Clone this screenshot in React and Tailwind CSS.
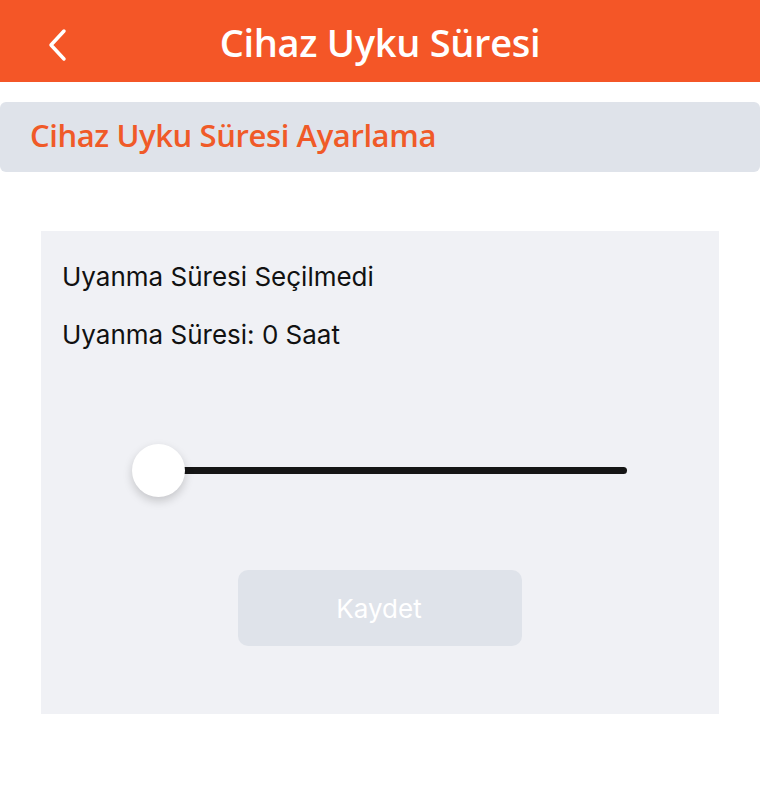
export default function App() {
  return (
    <div className="w-[760px] h-[800px] bg-white flex flex-col" style={{ fontFamily: "Inter, 'Noto Sans', sans-serif" }}>
      <header className="h-[82px] bg-[#F45627] flex items-center relative shrink-0">
        <div className="absolute left-[44px] top-[26px]">
          <svg width="28" height="38" viewBox="0 0 28 38" fill="none">
            <path d="M20 5 L7 19 L20 33" stroke="white" strokeWidth="3.5" strokeLinecap="round" strokeLinejoin="round" />
          </svg>
        </div>
        <h1 className="flex-1 text-center text-white text-[38px] font-semibold leading-none tracking-[-0.3px] pt-[2px]" style={{ fontFamily: "'Open Sans', sans-serif" }}>
          Cihaz Uyku Süresi
        </h1>
      </header>
      <div className="mt-[20px] h-[70px] bg-[#DFE3EA] rounded-[6px] flex items-center px-[30px]">
        <span className="text-[#F05A28] text-[31px] font-semibold tracking-[-0.4px] leading-none pb-[4px]" style={{ fontFamily: "'Open Sans', sans-serif" }}>
          Cihaz Uyku Süresi Ayarlama
        </span>
      </div>
      <div className="mt-[59px] mx-[41px] h-[483px] bg-[#F0F1F5] flex flex-col px-[21px] pt-[26px]">
        <p className="text-[26px] text-[#111] leading-[40px]">Uyanma Süresi Seçilmedi</p>
        <p className="mt-[18px] text-[26px] text-[#111] leading-[40px]">Uyanma Süresi: 0 Saat</p>
        <div className="mt-[88px] ml-[70px] mr-[71px] relative h-[54px] flex items-center">
          <div className="absolute left-[20px] right-0 h-[7px] bg-[#151515] rounded-full" />
          <div className="relative w-[53px] h-[53px] rounded-full bg-white shadow-[0_4px_10px_rgba(0,0,0,0.18)]" />
        </div>
        <div className="mt-[73px] flex justify-center">
          <button className="w-[284px] h-[76px] rounded-[10px] bg-[#DFE3EA] text-white text-[26px] pr-[2px]">Kaydet</button>
        </div>
      </div>
    </div>
  );
}
